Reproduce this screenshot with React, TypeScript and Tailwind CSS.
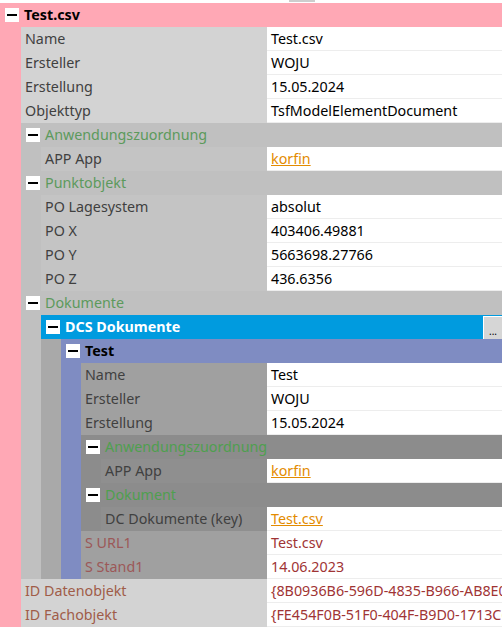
import React from "react";

type Row = {
  kind: "row";
  label: string;
  value: string;
  labelColor?: string;
  valueColor?: string;
  link?: boolean;
};

type Group = {
  kind: "group";
  title: string;
  headerBg: string;
  headerText: string;
  indentBg: string;
  indentW?: string;
  labelBg: string;
  button?: boolean;
  children: TreeNode[];
};

type TreeNode = Row | Group;

const row = (label: string, value: string, extra: Partial<Row> = {}): Row => ({
  kind: "row",
  label,
  value,
  ...extra,
});

const red = { labelColor: "text-[#9c5858]", valueColor: "text-[#a03434]" };

const tree: Group = {
  kind: "group",
  title: "Test.csv",
  headerBg: "bg-[#ffa8b5]",
  headerText: "font-bold text-black",
  indentBg: "bg-[#ffa8b5]",
  indentW: "w-[21px]",
  labelBg: "bg-[#d3d3d3]",
  children: [
    row("Name", "Test.csv"),
    row("Ersteller", "WOJU"),
    row("Erstellung", "15.05.2024"),
    row("Objekttyp", "TsfModelElementDocument"),
    {
      kind: "group",
      title: "Anwendungszuordnung",
      headerBg: "bg-[#c0c0c0]",
      headerText: "text-[#5c9a5c]",
      indentBg: "bg-[#c0c0c0]",
      labelBg: "bg-[#c4c4c4]",
      children: [row("APP App", "korfin", { link: true })],
    },
    {
      kind: "group",
      title: "Punktobjekt",
      headerBg: "bg-[#c0c0c0]",
      headerText: "text-[#5c9a5c]",
      indentBg: "bg-[#c0c0c0]",
      labelBg: "bg-[#c4c4c4]",
      children: [
        row("PO Lagesystem", "absolut"),
        row("PO X", "403406.49881"),
        row("PO Y", "5663698.27766"),
        row("PO Z", "436.6356"),
      ],
    },
    {
      kind: "group",
      title: "Dokumente",
      headerBg: "bg-[#c0c0c0]",
      headerText: "text-[#5c9a5c]",
      indentBg: "bg-[#c0c0c0]",
      labelBg: "bg-[#c4c4c4]",
      children: [
        {
          kind: "group",
          title: "DCS Dokumente",
          headerBg: "bg-[#009bdf]",
          headerText: "font-bold text-white",
          indentBg: "bg-[#a9a9a9]",
          labelBg: "bg-[#a9a9a9]",
          button: true,
          children: [
            {
              kind: "group",
              title: "Test",
              headerBg: "bg-[#7f8cc2]",
              headerText: "font-bold text-black",
              indentBg: "bg-[#7f8cc2]",
              labelBg: "bg-[#a0a0a0]",
              children: [
                row("Name", "Test"),
                row("Ersteller", "WOJU"),
                row("Erstellung", "15.05.2024"),
                {
                  kind: "group",
                  title: "Anwendungszuordnung",
                  headerBg: "bg-[#8c8c8c]",
                  headerText: "text-[#4f9f4f]",
                  indentBg: "bg-[#8c8c8c]",
                  labelBg: "bg-[#8f8f8f]",
                  children: [row("APP App", "korfin", { link: true })],
                },
                {
                  kind: "group",
                  title: "Dokument",
                  headerBg: "bg-[#8c8c8c]",
                  headerText: "text-[#4f9f4f]",
                  indentBg: "bg-[#8c8c8c]",
                  labelBg: "bg-[#8f8f8f]",
                  children: [row("DC Dokumente (key)", "Test.csv", { link: true })],
                },
                row("S URL1", "Test.csv", red),
                row("S Stand1", "14.06.2023", red),
              ],
            },
          ],
        },
      ],
    },
    row("ID Datenobjekt", "{8B0936B6-596D-4835-B966-AB8E0C41F2D7}", {
      labelColor: "text-[#a05c48]",
      valueColor: "text-[#a03434]",
    }),
    row("ID Fachobjekt", "{FE454F0B-51F0-404F-B9D0-1713C6A0B2E1}", {
      labelColor: "text-[#a05c48]",
      valueColor: "text-[#a03434]",
    }),
  ],
};

const MinusBox = () => (
  <span className="flex h-[14px] w-[14px] shrink-0 items-center justify-center bg-white">
    <span className="h-[2px] w-[10px] bg-black" />
  </span>
);

const PropRow = ({ r, labelBg }: { r: Row; labelBg: string }) => (
  <div className="flex h-6">
    <div
      className={`flex min-w-0 flex-1 items-center overflow-hidden whitespace-nowrap pl-1 ${labelBg} ${
        r.labelColor ?? "text-[#404040]"
      }`}
    >
      {r.label}
    </div>
    <div
      className={`flex w-[235px] shrink-0 items-center overflow-hidden whitespace-nowrap border-b border-[#ededed] bg-white pl-1 ${
        r.link ? "text-[#e38b00] underline" : r.valueColor ?? "text-black"
      }`}
    >
      {r.value}
    </div>
  </div>
);

const TreeGroup = ({ g }: { g: Group }) => (
  <div>
    <div className={`flex h-6 items-center ${g.headerBg}`}>
      <span className="ml-[5px]">
        <MinusBox />
      </span>
      <span className={`ml-[5px] whitespace-nowrap ${g.headerText}`}>{g.title}</span>
      {g.button && (
        <span className="ml-auto flex h-[23px] w-[19px] items-end justify-center self-end border-l border-t border-white bg-[#d6d6d6] pb-[3px] text-[10px] leading-none text-black">
          ...
        </span>
      )}
    </div>
    <div className="flex">
      <div className={`shrink-0 ${g.indentW ?? "w-5"} ${g.indentBg}`} />
      <div className="min-w-0 flex-1">
        {g.children.map((c, i) =>
          c.kind === "row" ? (
            <PropRow key={i} r={c} labelBg={g.labelBg} />
          ) : (
            <TreeGroup key={i} g={c} />
          )
        )}
      </div>
    </div>
  </div>
);

export default function App() {
  return (
    <div className="h-[627px] w-[502px] overflow-hidden bg-white font-['Noto_Sans','DejaVu_Sans',sans-serif] text-[14.3px]">
      <div className="flex h-[3px]">
        <div className="w-[289px]" />
        <div className="h-[2px] w-[26px] bg-[#cdcdcd]" />
      </div>
      <TreeGroup g={tree} />
    </div>
  );
}
